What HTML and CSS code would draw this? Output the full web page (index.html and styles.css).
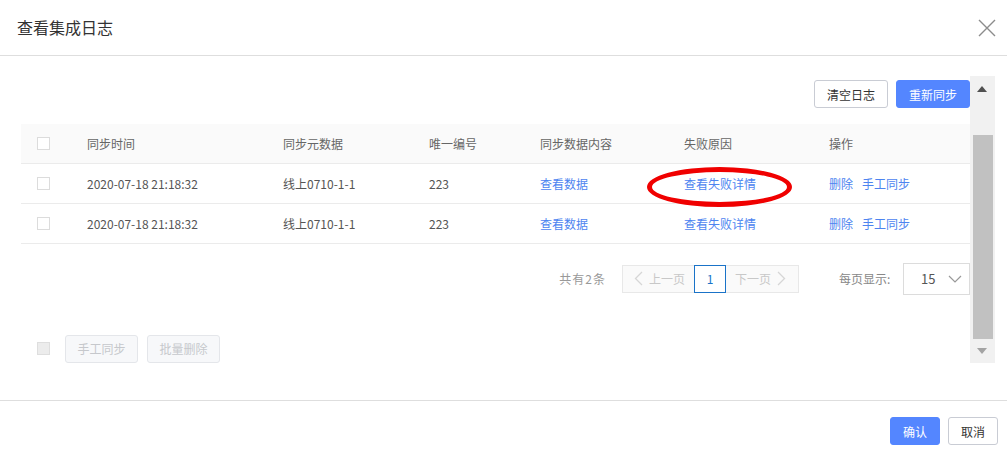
FILE: index.html
```html
<!DOCTYPE html>
<html>
<head>
	<meta charset="UTF-8">
	<title>查看集成日志</title>
	<link rel="stylesheet" href="styles.css">
</head>
<body>
	<div class="dialog">
		<div class="dlg-head">
			<span class="dlg-title">查看集成日志</span>
			<span class="dlg-close">
				<svg width="18" height="18" viewBox="0 0 18 18"><path d="M1 1L17 17M17 1L1 17" stroke="#8c8c8c" stroke-width="1.4" fill="none"/></svg>
			</span>
		</div>
		<div class="dlg-body">
			<div class="scroll">
				<div class="content">
					<div class="tools">
						<span class="btn">清空日志</span>
						<span class="btn btn-primary">重新同步</span>
					</div>
					<table class="grid">
						<colgroup>
							<col style="width:50px">
							<col style="width:196px">
							<col style="width:146px">
							<col style="width:111px">
							<col style="width:144px">
							<col style="width:145px">
							<col>
						</colgroup>
						<thead>
							<tr>
								<th><i class="chk"></i></th>
								<th>同步时间</th>
								<th>同步元数据</th>
								<th>唯一编号</th>
								<th>同步数据内容</th>
								<th>失败原因</th>
								<th>操作</th>
							</tr>
						</thead>
						<tbody>
							<tr>
								<td><i class="chk"></i></td>
								<td>2020-07-18 21:18:32</td>
								<td>线上0710-1-1</td>
								<td>223</td>
								<td><a>查看数据</a></td>
								<td class="mark"><a>查看失败详情</a><span class="ring"></span></td>
								<td><a>删除</a><a class="gap">手工同步</a></td>
							</tr>
							<tr>
								<td><i class="chk"></i></td>
								<td>2020-07-18 21:18:32</td>
								<td>线上0710-1-1</td>
								<td>223</td>
								<td><a>查看数据</a></td>
								<td><a>查看失败详情</a></td>
								<td><a>删除</a><a class="gap">手工同步</a></td>
							</tr>
						</tbody>
					</table>
					<div class="pager">
						<span class="total">共有2条</span>
						<div class="pages">
							<span class="pg pg-prev">
								<svg class="arr" width="9" height="15" viewBox="0 0 9 15"><path d="M8 1L1.5 7.5L8 14" stroke="#d6d6d6" stroke-width="1.3" fill="none"/></svg>上一页
							</span>
							<span class="pg pg-cur">1</span>
							<span class="pg pg-next">下一页
								<svg class="arr" width="9" height="15" viewBox="0 0 9 15"><path d="M1 1L7.5 7.5L1 14" stroke="#d6d6d6" stroke-width="1.3" fill="none"/></svg>
							</span>
						</div>
						<span class="size-label">每页显示:</span>
						<div class="select">
							<span>15</span>
							<svg width="14" height="8" viewBox="0 0 14 8"><path d="M1 1L7 7L13 1" stroke="#999" stroke-width="1.2" fill="none"/></svg>
						</div>
					</div>
					<div class="batch">
						<i class="chk chk-dis"></i>
						<span class="btn btn-dis">手工同步</span>
						<span class="btn btn-dis">批量删除</span>
					</div>
				</div>
				<div class="sbar">
					<span class="sb-up"></span>
					<span class="sb-thumb"></span>
					<span class="sb-down"></span>
				</div>
			</div>
		</div>
		<div class="dlg-foot">
			<span class="btn btn-primary btn-sm">确认</span>
			<span class="btn btn-sm">取消</span>
		</div>
	</div>
</body>
</html>
```

FILE: styles.css
```css
*{
	padding: 0;
	margin: 0;
	box-sizing: border-box;
}
body{
	background: #fff;
	font-family: "Noto Sans CJK SC", "Open Sans", sans-serif;
	font-size: 12px;
	color: #555;
}
.dialog{
	width: 1007px;
	height: 459px;
	display: flex;
	flex-direction: column;
}
.dlg-head{
	height: 56px;
	border-bottom: 1px solid #dedede;
	display: flex;
	align-items: center;
	justify-content: space-between;
	padding: 0 11px 2px 17px;
}
.dlg-title{
	font-size: 16px;
	color: #333;
	line-height: 20px;
}
.dlg-close{
	display: flex;
	width: 18px;
	height: 18px;
	margin-top: 2px;
}
.dlg-body{
	height: 344px;
	padding: 20px 12px 0 21px;
}
.scroll{
	height: 287px;
	display: flex;
}
.content{
	flex: 1;
	padding-top: 4px;
}
.tools{
	display: flex;
	justify-content: flex-end;
	gap: 8px;
}
.btn{
	display: inline-flex;
	align-items: center;
	justify-content: center;
	width: 74px;
	height: 28px;
	border: 1px solid #c9ccd4;
	border-radius: 3px;
	background: #fff;
	color: #333;
	font-size: 12px;
}
.btn-primary{
	background: #5486ff;
	border-color: #5486ff;
	color: #fff;
}
.btn-sm{
	width: 50px;
}
.btn-dis{
	width: 73px;
	background: #f7f8fa;
	border-color: #e4e6ea;
	color: #c6c8cc;
}
.grid{
	width: 100%;
	margin-top: 16px;
	border-collapse: collapse;
	table-layout: fixed;
}
.grid th,
.grid td{
	height: 40px;
	padding: 0 0 0 16px;
	text-align: left;
	font-weight: normal;
	border-bottom: 1px solid #ebebeb;
	white-space: nowrap;
}
.grid th{
	height: 39px;
	background: #fafafa;
	color: #666;
}
.grid td{
	color: #555;
}
.grid a{
	color: #4d84f0;
}
.grid a.gap{
	margin-left: 9px;
}
.chk{
	display: block;
	width: 13px;
	height: 13px;
	border: 1px solid #dcdcdc;
	background: #fff;
}
.chk-dis{
	background: #ececec;
	border-color: #dedede;
}
.mark{
	position: relative;
}
/* red annotation ring drawn over the cell */
.ring{
	position: absolute;
	left: -21px;
	top: 3px;
	width: 145px;
	height: 40px;
	border: 5px solid #f00000;
	border-radius: 50%;
}
.pager{
	margin-top: 19px;
	display: flex;
	align-items: center;
	justify-content: flex-end;
	height: 32px;
	color: #999;
}
.total{
	margin-right: 16px;
	letter-spacing: 1px;
}
.pages{
	display: flex;
	height: 28px;
	border: 1px solid #e8e8e8;
	background: #fafafa;
}
.pg{
	display: flex;
	align-items: center;
	height: 26px;
	color: #c8c8c8;
}
.pg-prev{
	width: 71px;
	padding-left: 11px;
}
.pg-next{
	width: 72px;
	padding-left: 9px;
}
.pg-cur{
	justify-content: center;
	width: 32px;
	height: 28px;
	margin: -1px 0;
	border: 1px solid #1a73c8;
	background: #fff;
	color: #1a73c8;
}
.pg-prev .arr{
	margin-right: 6px;
}
.pg-next .arr{
	margin-left: 6px;
}
.size-label{
	width: 52px;
	margin-left: 40px;
	margin-right: 12px;
	color: #888;
	white-space: nowrap;
}
.select{
	width: 67px;
	height: 32px;
	border: 1px solid #dcdcdc;
	display: flex;
	align-items: center;
	justify-content: space-between;
	padding: 0 7px 0 17px;
	color: #555;
	font-size: 13px;
}
.batch{
	margin-top: 40px;
	display: flex;
	align-items: center;
	padding-left: 16px;
	gap: 9px;
}
.batch .chk{
	margin-right: 6px;
}
.sbar{
	width: 25px;
	background: #f1f1f1;
	position: relative;
}
.sb-up,
.sb-down{
	position: absolute;
	left: 7px;
	width: 0;
	height: 0;
	border-left: 5.5px solid transparent;
	border-right: 5.5px solid transparent;
}
.sb-up{
	top: 10px;
	border-bottom: 6px solid #505050;
}
.sb-down{
	bottom: 9px;
	border-top: 6px solid #a3a3a3;
}
.sb-thumb{
	position: absolute;
	left: 3px;
	top: 59px;
	width: 20px;
	height: 204px;
	background: #c1c1c1;
}
.dlg-foot{
	border-top: 1px solid #dedede;
	display: flex;
	justify-content: flex-end;
	gap: 8px;
	padding: 16px 9px 0 0;
}
```
